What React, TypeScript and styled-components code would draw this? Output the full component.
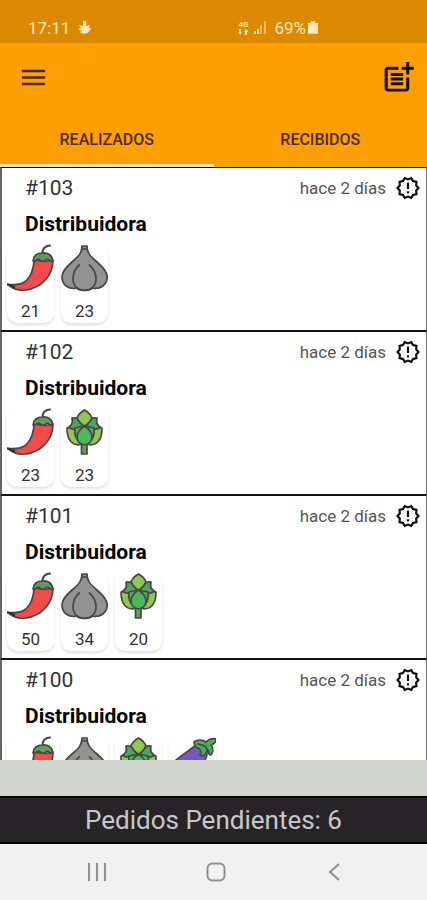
import React from "react";
import styled, { createGlobalStyle } from "styled-components";
import { MdMenu, MdOutlineNewReleases, MdPostAdd } from "react-icons/md";

const GlobalStyle = createGlobalStyle`
  * { box-sizing: border-box; }
  body { margin: 0; font-family: Roboto, "Noto Sans", sans-serif; background: #d3d5d1; }
  button { border: 0; padding: 0; background: none; font: inherit; color: inherit; cursor: pointer; }
`;

const Screen = styled.div`
  display: flex;
  flex-direction: column;
  height: 100vh;
`;

const StatusBar = styled.div`
  display: flex;
  flex: none;
  justify-content: space-between;
  align-items: center;
  height: 43px;
  padding: 12px 109px 0 28px;
  background: #db8a00;
  color: #ffe9bd;
  font-size: 17px;
  line-height: 20px;
`;

const StatusGroup = styled.div<{ $gap: number }>`
  display: flex;
  align-items: center;
  gap: ${(p) => p.$gap}px;
`;

const NetworkLabel = styled.span`
  display: grid;
  justify-items: center;
  font-size: 8px;
  font-weight: 700;
  line-height: 8px;
`;

const Header = styled.header`
  flex: none;
  background: #ff9f03;
`;

const Toolbar = styled.div`
  display: flex;
  justify-content: space-between;
  align-items: center;
  height: 68px;
  padding: 0 10px 0 18px;
`;

const IconButton = styled.button<{ $color: string }>`
  display: flex;
  color: ${(p) => p.$color};
`;

const Tabs = styled.div`
  display: grid;
  grid-template-columns: 1fr 1fr;
`;

const Tab = styled.button<{ $active?: boolean }>`
  height: 56px;
  padding-top: 3px;
  border-bottom: 3px solid ${(p) => (p.$active ? "#eee3c8" : "transparent")};
  color: #4b2b0c;
  font-size: 16px;
  font-weight: 500;
`;

const OrderList = styled.main`
  flex: 1;
  min-height: 0;
  overflow: hidden;
`;

const OrderCard = styled.article`
  height: 164px;
  padding: 7px 5px 0;
  border: 1px solid #111;
  border-left: 2px solid #666;
  border-right-color: #777;
  background: #fff;
`;

const OrderTop = styled.div`
  display: flex;
  align-items: center;
  height: 26px;
  padding-left: 18px;
  color: #555;
  font-size: 17px;
`;

const OrderNumber = styled.span`
  flex: 1;
  color: #333;
  font-size: 21px;
`;

const StatusIcon = styled(MdOutlineNewReleases)`
  margin-left: 9px;
  color: #111;
`;

const Company = styled.h2`
  margin: 11px 0 8px;
  padding-left: 18px;
  color: #000;
  font-size: 21px;
  font-weight: 700;
  line-height: 24px;
`;

const Products = styled.div`
  display: flex;
  gap: 7px;
`;

const Product = styled.div`
  width: 47px;
  height: 79px;
  border-radius: 10px;
  background: #fff;
  box-shadow: 0 2px 3px rgba(0, 0, 0, 0.12);
  color: #333;
  font-size: 17px;
  line-height: 38px;
  text-align: center;
  svg { display: block; }
`;

const BottomSpace = styled.div`
  flex: none;
  height: 36px;
  background: #d3d5d1;
`;

const Pending = styled.footer`
  display: flex;
  flex: none;
  align-items: center;
  justify-content: center;
  height: 48px;
  border: solid #000;
  border-width: 2px 0;
  background: #272428;
  color: #c8c8c8;
  font-size: 26px;
`;

const SystemNav = styled.nav`
  display: flex;
  flex: none;
  justify-content: space-between;
  align-items: center;
  height: 56px;
  padding: 0 19% 0 20%;
  background: #f1f1f1;
  color: #8e8e8e;
`;

const NavButton = styled.button`
  display: flex;
  justify-content: center;
  width: 24px;
`;

const Art = ({ children }: { children: React.ReactNode }) => (
  <svg width="47" height="48" viewBox="0 0 47 48" stroke="#474747" strokeWidth="1.7" strokeLinejoin="round" strokeLinecap="round" aria-hidden="true">
    {children}
  </svg>
);

const Chili = () => (
  <Art>
    <path d="M27 15C27 25 24 32 19 37C14 41 7 41 1 40.500C6 45 12 47 19 46C34 44 46 32 46 16C39 18 33 18 27 15Z" fill="#f14c49" />
    <path d="M1 40.500L7 43" fill="none" stroke="#30303a" strokeWidth="2.400" />
    <path d="M26 17C26 12 30 9 35 9C41 8 46 12 45.500 17C43 18 42 15 40 15C37 18 34 18 32 15C30 15 29 18 26 17Z" fill="#639a62" />
    <path d="M35.500 9C35.500 5 38 2 43 1.500" fill="none" strokeWidth="2" />
  </Art>
);

const Garlic = () => (
  <Art>
    <path d="M21 2H26C26 9 29 12 36 18C43 24 46.200 28 46.200 33C46 41 39 46 31 44C29 47 18 47 16 44C8 46 1 41 1 33C1 28 4 24 11 18C18 12 21 9 21 2Z" fill="#929292" />
    <path d="M18.500 21C13 25 12 30 12 35C12 42 17 46.500 23.500 46.500S35 42 35 35C35 30 33 25 28.500 21" fill="none" />
    <path d="M21 5H26" fill="none" />
  </Art>
);

const Artichoke = () => (
  <Art>
    <path d="M20.500 35H26V46H20.500Z" fill="#6e9b57" />
    <path d="M6 20C11 18 18 22 22 36C12 39 6 33 6 20Z" fill="#91c653" />
    <path d="M41 20C36 18 29 22 25 36C35 39 41 33 41 20Z" fill="#91c653" />
    <path d="M11 10C17 9 22 13 23.500 19C18 22 10 22 8 19C11 17 12 14 11 10Z" fill="#48a85a" />
    <path d="M36 10C30 9 25 13 23.500 19C29 22 37 22 39 19C36 17 35 14 36 10Z" fill="#48a85a" />
    <path d="M23.500 2C27 4 30 7 31 10C29 14 26 17 23.500 18C21 17 18 14 16 10C17 7 20 4 23.500 2Z" fill="#91c653" />
    <path d="M14 20L23.500 18L33 20C34 27 32 31 28 34H19C15 31 13 27 14 20Z" fill="#5fac56" />
    <path d="M23.500 18C28 21 31 25 31 29C31 33 28 36 23.500 37C19 36 16 33 16 29C16 25 19 21 23.500 18Z" fill="#49b95b" />
  </Art>
);

const Eggplant = () => (
  <Art>
    <path d="M27 9C20 15 10 20 3 28C-3 38 8 49 20 44C31 40 35 28 38 19Z" fill="#7557bd" />
    <path d="M25 6C29 3 34 4 37 6C40 3 44 2 47 3C47 6 45 8 42 9C45 13 44 17 42 19C40 19 39 17 38 15C37 19 34 21 31 19C33 16 31 13 29 12C27 12 25 9 25 6Z" fill="#49ae55" />
    <path d="M29 8L36 10L40 16" fill="none" />
  </Art>
);

const art = { chili: Chili, garlic: Garlic, artichoke: Artichoke, eggplant: Eggplant };
type Item = { kind: keyof typeof art; count?: number };

const orders: { id: number; items: Item[] }[] = [
  { id: 103, items: [{ kind: "chili", count: 21 }, { kind: "garlic", count: 23 }] },
  { id: 102, items: [{ kind: "chili", count: 23 }, { kind: "artichoke", count: 23 }] },
  { id: 101, items: [{ kind: "chili", count: 50 }, { kind: "garlic", count: 34 }, { kind: "artichoke", count: 20 }] },
  { id: 100, items: [{ kind: "chili" }, { kind: "garlic" }, { kind: "artichoke" }, { kind: "eggplant" }] },
];

export default function App() {
  return (
    <Screen>
      <GlobalStyle />
      <StatusBar>
        <StatusGroup $gap={8}>
          <span>17:11</span>
          <svg width="14" height="15" viewBox="0 0 14 15" fill="currentColor" aria-hidden="true">
            <path d="M5 1C7 0 9 1 8.500 4L8 6L12 5L11 8L13.500 9L11 11C10 14 5 15 2 12L4 11L0 9L3 8L1 5L5 6Z" />
          </svg>
        </StatusGroup>
        <StatusGroup $gap={2}>
          <StatusGroup $gap={6}>
            <NetworkLabel>
              <span>4G</span>
              <svg width="10" height="6" viewBox="0 0 10 6" fill="currentColor" aria-hidden="true">
                <path d="M0 3h1V0h2v3h1L2 6zM6 3h1v3h2V3h1L8 0z" />
              </svg>
            </NetworkLabel>
            <StatusGroup $gap={8}>
              <svg width="12" height="13" viewBox="0 0 12 13" fill="currentColor" aria-hidden="true">
                <path d="M0 10h2v3H0zM3 8h2v5H3z" />
                <path d="M6 4h2v9H6zM10 0h2v13h-2z" opacity=".5" />
              </svg>
              <span>69%</span>
            </StatusGroup>
          </StatusGroup>
          <svg width="10" height="13" viewBox="0 0 11 14" fill="currentColor" aria-hidden="true">
            <path d="M3 0h5v2h3v12H0V2h3z" />
          </svg>
        </StatusGroup>
      </StatusBar>
      <Header>
        <Toolbar>
          <IconButton $color="#4a2803" aria-label="Menú"><MdMenu size={31} /></IconButton>
          <IconButton $color="#141005" aria-label="Nuevo pedido"><MdPostAdd size={37} /></IconButton>
        </Toolbar>
        <Tabs role="tablist">
          <Tab role="tab" aria-selected="true" $active>REALIZADOS</Tab>
          <Tab role="tab" aria-selected="false">RECIBIDOS</Tab>
        </Tabs>
      </Header>
      <OrderList>
        {orders.map((order) => (
          <OrderCard key={order.id}>
            <OrderTop>
              <OrderNumber>#{order.id}</OrderNumber>
              <time>hace 2 días</time>
              <StatusIcon size={26} />
            </OrderTop>
            <Company>Distribuidora</Company>
            <Products>
              {order.items.map(({ kind, count }) => {
                const Picture = art[kind];
                return (
                  <Product key={kind}>
                    <Picture />
                    {count}
                  </Product>
                );
              })}
            </Products>
          </OrderCard>
        ))}
      </OrderList>
      <BottomSpace />
      <Pending>Pedidos Pendientes: 6</Pending>
      <SystemNav>
        <NavButton aria-label="Recientes">
          <svg width="20" height="20" viewBox="0 0 20 20" stroke="currentColor" strokeWidth="2"><path d="M2 1v18M10 1v18M18 1v18" /></svg>
        </NavButton>
        <NavButton aria-label="Inicio">
          <svg width="20" height="20" viewBox="0 0 20 20" fill="none" stroke="currentColor" strokeWidth="2"><rect x="1.500" y="1.500" width="17" height="17" rx="5" /></svg>
        </NavButton>
        <NavButton aria-label="Atrás">
          <svg width="12" height="20" viewBox="0 0 12 20" fill="none" stroke="currentColor" strokeWidth="2"><path d="M11 2L2 10L11 18" /></svg>
        </NavButton>
      </SystemNav>
    </Screen>
  );
}
